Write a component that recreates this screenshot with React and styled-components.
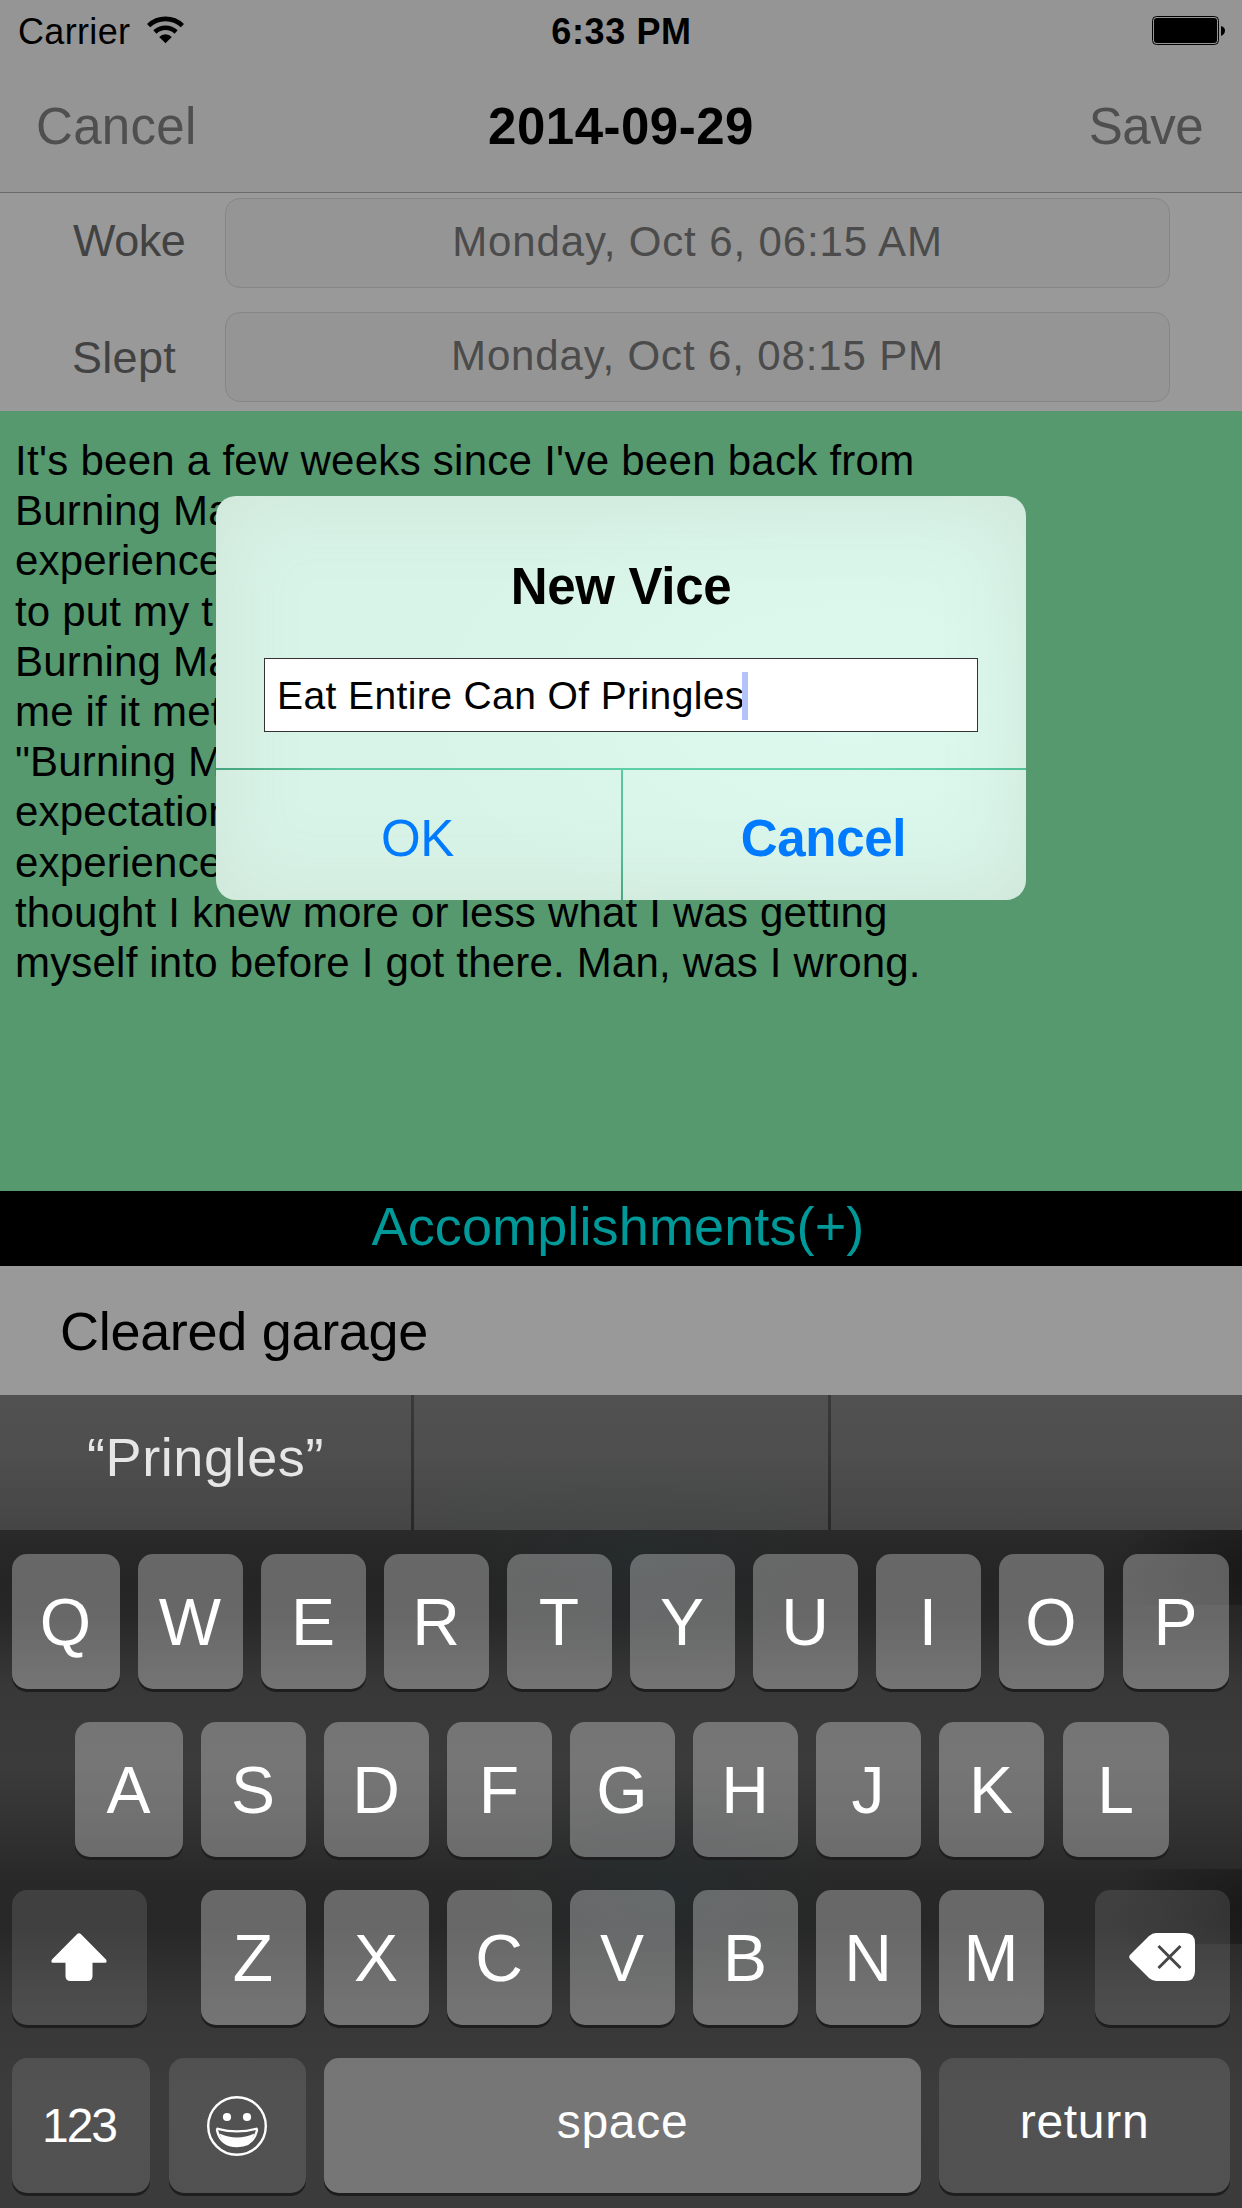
import React from "react";
import styled, { createGlobalStyle } from "styled-components";

const GlobalStyle = createGlobalStyle`
  * { box-sizing: border-box; }
  body {
    margin: 0;
    background: #999999;
    font-family: "Liberation Sans", Arial, sans-serif;
    color: #000;
  }
`;

const Screen = styled.div`
  position: relative;
  width: 1242px;
  height: 2208px;
  overflow: hidden;
  display: flex;
  flex-direction: column;
  white-space: nowrap;
`;

/* ---- header ---- */

const Header = styled.header`
  height: 193px;
  background: #959595;
  border-bottom: 1px solid #6a6a6a;
  display: flex;
  flex-direction: column;
`;

const StatusBar = styled.div`
  height: 60px;
  padding: 3px 17px 0 18px;
  display: grid;
  grid-template-columns: 1fr auto 1fr;
  align-items: center;
  font-size: 36px;
`;

const Carrier = styled.div`
  display: flex;
  align-items: center;
  gap: 17px;
  letter-spacing: 0.33px;
  svg { margin-top: -4px; }
`;

const Clock = styled.div`
  font-weight: 700;
  letter-spacing: 0.6px;
`;

const Battery = styled.div`
  justify-self: end;
  display: flex;
  margin: -3px -1px 0 0;
`;

const NavBar = styled.nav`
  height: 132px;
  padding: 1px 39px 0 36px;
  display: grid;
  grid-template-columns: 1fr auto 1fr;
  align-items: center;
  font-size: 51px;
`;

const NavAction = styled.span`
  color: #4f4f4f;
  justify-self: ${(p) => (p.$end ? "end" : "start")};
  letter-spacing: ${(p) => (p.$end ? "-0.5px" : "0.3px")};
`;

const NavTitle = styled.span`
  padding-left: 3px;
  font-weight: 700;
  letter-spacing: 0.5px;
`;

/* ---- form ---- */

const Form = styled.section`
  height: 218px;
  padding: 5px 72px 0 72px;
  display: flex;
  flex-direction: column;
  gap: 24px;
`;

const Field = styled.label`
  height: 90px;
  display: grid;
  grid-template-columns: 153px 945px;
  align-items: center;
`;

const FieldLabel = styled.span`
  font-size: 45px;
  color: #424242;
  letter-spacing: ${(p) => p.$tracking}px;
  padding-left: ${(p) => p.$indent}px;
  padding-bottom: ${(p) => p.$lift ?? 0}px;
  padding-top: ${(p) => p.$drop ?? 0}px;
`;

const FieldValue = styled.span`
  height: 90px;
  display: flex;
  align-items: center;
  justify-content: center;
  padding-bottom: 3px;
  background: #959595;
  border: 1px solid #868686;
  border-radius: 15px;
  font-size: 42px;
  letter-spacing: 0.86px;
  color: #4b4b4b;
`;

const Journal = styled.section`
  height: 780px;
  padding: 25px 0 0 ${(p) => p.$inset}px;
  background: #56996e;
  font-size: 42px;
  line-height: 50.2px;
`;

const JournalLine = styled.div`
  letter-spacing: ${(p) => p.$tracking ?? 0.25}px;
`;

const SectionBar = styled.div`
  height: 75px;
  display: flex;
  align-items: center;
  justify-content: center;
  padding: 0 6px 5px 0;
  background: #000;
  color: #009999;
  font-size: 54px;
  letter-spacing: 0.13px;
`;

const ListItem = styled.div`
  height: 129px;
  display: flex;
  align-items: center;
  padding: 0 0 0 60px;
  font-size: 54px;
  letter-spacing: -0.3px;
  background: #999999;
`;

/* ---- alert ---- */

const Alert = styled.div`
  position: absolute;
  left: 216px;
  top: 496px;
  width: 810px;
  height: 404px;
  border-radius: 20px;
  overflow: hidden;
  display: flex;
  flex-direction: column;
  background:
    radial-gradient(ellipse 420px 240px at 78% 52%, rgba(222, 250, 240, 0.9), rgba(222, 250, 240, 0)),
    #d8f3e7;
  box-shadow: inset 0 0 80px rgba(205, 227, 213, 0.85);
`;

const AlertTitle = styled.div`
  height: 162px;
  padding-top: 19px;
  display: flex;
  align-items: center;
  justify-content: center;
  font-size: 51px;
  font-weight: 700;
  letter-spacing: -0.3px;
`;

const AlertInput = styled.div`
  height: 74px;
  margin: 0 48px 36px;
  padding: 1px 0 0 12px;
  display: flex;
  align-items: center;
  background: #fff;
  border: 1px solid #333;
  font-size: 39px;
  letter-spacing: 0.4px;
`;

const Caret = styled.span`
  width: 6px;
  height: 48px;
  margin-left: -3px;
  background: #b3c2f9;
`;

const AlertActions = styled.div`
  height: 132px;
  display: grid;
  grid-template-columns: 405px 2px 403px;
  border-top: 2px solid;
  border-image: linear-gradient(90deg, #46a27a, #5cc8a0 15%, #5fd3ab 80%, #52c096) 1;
`;

const AlertDivider = styled.div`
  background: linear-gradient(#5cc8a0, #58bd95 60%, #4aa67d);
`;

const AlertButton = styled.div`
  display: flex;
  align-items: center;
  justify-content: center;
  padding: 6px 2px 0 0;
  color: #007aff;
  font-size: 51px;
  font-weight: ${(p) => (p.$strong ? 700 : 400)};
  letter-spacing: -0.3px;
`;

/* ---- keyboard ---- */

const Suggestions = styled.div`
  height: 135px;
  display: grid;
  grid-template-columns: 411px 3px 414px 3px 411px;
  background:
    radial-gradient(ellipse 220px 80px at 50% 100%, rgba(68, 76, 74, 0.35), rgba(68, 76, 74, 0)),
    linear-gradient(#515151, #4e4e4e 45%, #454545);
`;

const Suggestion = styled.div`
  display: flex;
  align-items: center;
  justify-content: center;
  padding-bottom: 11px;
  color: #e6e6e6;
  font-size: 54px;
  letter-spacing: 0.6px;
`;

const SuggestionRule = styled.div`
  background: linear-gradient(#3a3a3a, #282828);
`;

const Keyboard = styled.div`
  height: 678px;
  padding: 24px 12px 15px;
  display: flex;
  flex-direction: column;
  gap: 33px;
  background:
    radial-gradient(ellipse 130px 110px at 100% 55%, rgba(24, 24, 24, 0.9), rgba(24, 24, 24, 0)) 100% 0 / 170px 75px no-repeat,
    radial-gradient(ellipse 130px 110px at 100% 55%, rgba(24, 24, 24, 0.9), rgba(24, 24, 24, 0)) 100% 339px / 170px 75px no-repeat,
    radial-gradient(ellipse 170px 110px at 640px 30px, rgba(36, 45, 47, 0.6), rgba(36, 45, 47, 0)),
    radial-gradient(ellipse 170px 110px at 665px 360px, rgba(36, 45, 47, 0.6), rgba(36, 45, 47, 0)),
    linear-gradient(
      #2a2a2a 0,
      #252525 50px,
      #272727 85px,
      #383838 155px,
      #3b3b3b 235px,
      #343434 285px,
      #292929 345px,
      #272727 395px,
      #373737 480px,
      #3c3c3c 560px,
      #3b3b3b 678px
    );
`;

const KeyRow = styled.div`
  height: 135px;
  display: flex;
  gap: 18px;
  padding-left: ${(p) => p.$indent ?? 0}px;
`;

const Key = styled.div`
  width: ${(p) => p.$width ?? 105}px;
  height: 135px;
  flex: none;
  margin-left: ${(p) => p.$shift ?? 0}px;
  display: flex;
  align-items: center;
  justify-content: center;
  padding: 0 ${(p) => p.$nudge ?? 1}px ${(p) => p.$lift ?? 0}px 0;
  border-radius: 15px;
  background: ${(p) => (p.$dark ? "rgba(255,255,255,0.115)" : "rgba(255,255,255,0.3)")};
  box-shadow: 0 3px 0 #1e1e1e;
  color: #fff;
  font-size: ${(p) => p.$size ?? 66}px;
  letter-spacing: ${(p) => p.$tracking ?? 0}px;
`;

const WifiIcon = () => (
  <svg width="37" height="28" viewBox="0 0 37 28" fill="none" stroke="#000">
    <path d="M1.6 9.6 A24.5 24.5 0 0 1 35.4 9.6" strokeWidth="4.6" />
    <path d="M7.9 16 A15.4 15.4 0 0 1 29.1 16" strokeWidth="4.6" />
    <path d="M18.5 27.2 L12.2 20.9 A9 9 0 0 1 24.8 20.9 Z" fill="#000" stroke="none" />
  </svg>
);

const BatteryIcon = () => (
  <svg width="74" height="29" viewBox="0 0 74 29">
    <rect x="0.5" y="0.5" width="66" height="28" rx="4" fill="none" stroke="#000" />
    <rect x="2" y="2" width="63" height="25" rx="3" />
    <path d="M69 10 Q73 11 73 14.5 T69 20 Z" />
  </svg>
);

const ShiftIcon = () => (
  <svg width="56" height="48" viewBox="0 0 56 48" fill="#fff">
    <path d="M26.2 0.9 Q28 -0.6 29.8 0.9 L55 26.6 Q56.6 29.6 54 29.8 L41.5 29.8 V43 Q41.5 48 36.5 48 H19.5 Q14.5 48 14.5 43 V29.8 L2 29.8 Q-0.6 29.6 1 26.6 Z" />
  </svg>
);

const DeleteIcon = () => (
  <svg width="66" height="48" viewBox="0 0 66 48">
    <path
      d="M27 0 H56 Q66 0 66 10 V38 Q66 48 56 48 H27 Q23.5 48 20 45 L1.2 26.2 Q-0.8 24 1.2 21.8 L20 3 Q23.5 0 27 0 Z"
      fill="#fff"
    />
    <path d="M29.5 13 L51.5 35 M51.5 13 L29.5 35" stroke="#474747" strokeWidth="3" />
  </svg>
);

const EmojiIcon = () => (
  <svg width="60" height="60" viewBox="0 0 60 60" fill="none">
    <circle cx="30" cy="30" r="28.8" stroke="#fff" strokeWidth="2.4" />
    <circle cx="20" cy="21" r="4.1" fill="#fff" />
    <circle cx="40" cy="21" r="4.1" fill="#fff" />
    <path
      d="M10.8 32.8 Q30 38 49.2 32.8 Q50.2 32.8 49.8 35 Q46 50 30 50 Q14 50 10.2 35 Q9.8 32.8 10.8 32.8 Z"
      stroke="#fff"
      strokeWidth="2.4"
      strokeLinejoin="round"
    />
    <path d="M12.5 37.5 Q30 45.5 47.5 37.5 Q44 50 30 50 Q16 50 12.5 37.5 Z" fill="#fff" />
  </svg>
);

const JOURNAL = [
  "It's been a few weeks since I've been back from",
  "Burning Man",
  "experience",
  "to put my t",
  "Burning Man",
  "me if it met",
  "\"Burning M",
  "expectation",
  "experience",
  "thought I knew more or less what I was getting",
  "myself into before I got there. Man, was I wrong.",
];

const edgeKey = (row, i) => {
  if (i === 0) return { $width: 108 };
  if (i === row.length - 1) return { $width: 106, $shift: 1 };
  return {};
};

const LetterRow = ({ letters, indent }) => (
  <KeyRow $indent={indent}>
    {letters.split("").map((k, i) => (
      <Key key={k} {...edgeKey(letters, i)}>{k}</Key>
    ))}
  </KeyRow>
);

export default function App() {
  return (
    <Screen>
      <GlobalStyle />
      <Header>
        <StatusBar>
          <Carrier>Carrier<WifiIcon /></Carrier>
          <Clock>6:33 PM</Clock>
          <Battery><BatteryIcon /></Battery>
        </StatusBar>
        <NavBar>
          <NavAction>Cancel</NavAction>
          <NavTitle>2014-09-29</NavTitle>
          <NavAction $end>Save</NavAction>
        </NavBar>
      </Header>

      <Form>
        <Field>
          <FieldLabel $indent={1} $lift={5} $tracking={-0.5}>Woke</FieldLabel>
          <FieldValue>Monday, Oct 6, 06:15 AM</FieldValue>
        </Field>
        <Field>
          <FieldLabel $indent={0} $drop={2} $tracking={0.3}>Slept</FieldLabel>
          <FieldValue>Monday, Oct 6, 08:15 PM</FieldValue>
        </Field>
      </Form>

      <Journal $inset={15}>
        {JOURNAL.map((line, i) => (
          <JournalLine key={i} $tracking={i === 0 ? 0.27 : 0.19}>{line}</JournalLine>
        ))}
      </Journal>

      <SectionBar>Accomplishments(+)</SectionBar>
      <ListItem>Cleared garage</ListItem>

      <Suggestions>
        <Suggestion>“Pringles”</Suggestion>
        <SuggestionRule />
        <Suggestion />
        <SuggestionRule />
        <Suggestion />
      </Suggestions>

      <Keyboard>
        <LetterRow letters="QWERTYUIOP" />
        <LetterRow letters="ASDFGHJKL" indent={63} />
        <KeyRow>
          <Key $dark $width={135} $lift={1}><ShiftIcon /></Key>
          {"ZXCVBNM".split("").map((k, i) => (
            <Key key={k} $shift={i === 0 ? 36 : 0}>{k}</Key>
          ))}
          <Key $dark $width={135} $shift={33} $nudge={2} $lift={1}><DeleteIcon /></Key>
        </KeyRow>
        <KeyRow>
          <Key $dark $width={138} $size={48} $tracking={-2} $nudge={4}>123</Key>
          <Key $dark $width={137} $shift={1}><EmojiIcon /></Key>
          <Key $width={597} $size={48} $tracking={0.7} $lift={8} $nudge={0}>space</Key>
          <Key $dark $width={291} $size={48} $tracking={0.7} $lift={8} $nudge={0}>return</Key>
        </KeyRow>
      </Keyboard>

      <Alert>
        <AlertTitle>New Vice</AlertTitle>
        <AlertInput>Eat Entire Can Of Pringles<Caret /></AlertInput>
        <AlertActions>
          <AlertButton>OK</AlertButton>
          <AlertDivider />
          <AlertButton $strong>Cancel</AlertButton>
        </AlertActions>
      </Alert>
    </Screen>
  );
}
